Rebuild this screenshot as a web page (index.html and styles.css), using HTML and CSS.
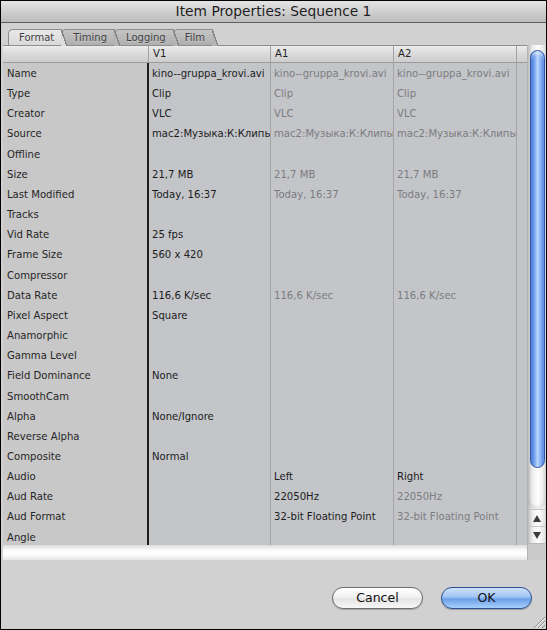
FILE: index.html
```html
<!DOCTYPE html>
<html>
<head>
<meta charset="utf-8">
<title>Item Properties: Sequence 1</title>
<link rel="stylesheet" href="styles.css">
</head>
<body>
<div class="window">
  <div class="titlebar">Item Properties: Sequence 1</div>
  <div class="content">
    <div class="tabs">
      <div class="tab active z4">Format</div>
      <div class="tab z3">Timing</div>
      <div class="tab z2">Logging</div>
      <div class="tab z1">Film</div>
    </div>
    <div class="pane">
      <div class="grid-area">
        <div class="table">
          <div class="row head">
            <div class="c l"></div><div class="c">V1</div><div class="c">A1</div><div class="c">A2</div><div class="c f"></div>
          </div>
          <div class="rows">
            <div class="row"><div class="c l">Name</div><div class="c">kino--gruppa_krovi.avi</div><div class="c g">kino--gruppa_krovi.avi</div><div class="c g">kino--gruppa_krovi.avi</div><div class="c f"></div></div>
            <div class="row"><div class="c l">Type</div><div class="c">Clip</div><div class="c g">Clip</div><div class="c g">Clip</div><div class="c f"></div></div>
            <div class="row"><div class="c l">Creator</div><div class="c">VLC</div><div class="c g">VLC</div><div class="c g">VLC</div><div class="c f"></div></div>
            <div class="row"><div class="c l">Source</div><div class="c">mac2:Музыка:К:Клипы:Кино</div><div class="c g">mac2:Музыка:К:Клипы:Кино</div><div class="c g">mac2:Музыка:К:Клипы:Кино</div><div class="c f"></div></div>
            <div class="row"><div class="c l">Offline</div><div class="c"></div><div class="c g"></div><div class="c g"></div><div class="c f"></div></div>
            <div class="row"><div class="c l">Size</div><div class="c">21,7 MB</div><div class="c g">21,7 MB</div><div class="c g">21,7 MB</div><div class="c f"></div></div>
            <div class="row"><div class="c l">Last Modified</div><div class="c">Today, 16:37</div><div class="c g">Today, 16:37</div><div class="c g">Today, 16:37</div><div class="c f"></div></div>
            <div class="row"><div class="c l">Tracks</div><div class="c"></div><div class="c g"></div><div class="c g"></div><div class="c f"></div></div>
            <div class="row"><div class="c l">Vid Rate</div><div class="c">25 fps</div><div class="c g"></div><div class="c g"></div><div class="c f"></div></div>
            <div class="row"><div class="c l">Frame Size</div><div class="c">560 x 420</div><div class="c g"></div><div class="c g"></div><div class="c f"></div></div>
            <div class="row"><div class="c l">Compressor</div><div class="c"></div><div class="c g"></div><div class="c g"></div><div class="c f"></div></div>
            <div class="row"><div class="c l">Data Rate</div><div class="c">116,6 K/sec</div><div class="c g">116,6 K/sec</div><div class="c g">116,6 K/sec</div><div class="c f"></div></div>
            <div class="row"><div class="c l">Pixel Aspect</div><div class="c">Square</div><div class="c g"></div><div class="c g"></div><div class="c f"></div></div>
            <div class="row"><div class="c l">Anamorphic</div><div class="c"></div><div class="c g"></div><div class="c g"></div><div class="c f"></div></div>
            <div class="row"><div class="c l">Gamma Level</div><div class="c"></div><div class="c g"></div><div class="c g"></div><div class="c f"></div></div>
            <div class="row"><div class="c l">Field Dominance</div><div class="c">None</div><div class="c g"></div><div class="c g"></div><div class="c f"></div></div>
            <div class="row"><div class="c l">SmoothCam</div><div class="c"></div><div class="c g"></div><div class="c g"></div><div class="c f"></div></div>
            <div class="row"><div class="c l">Alpha</div><div class="c">None/Ignore</div><div class="c g"></div><div class="c g"></div><div class="c f"></div></div>
            <div class="row"><div class="c l">Reverse Alpha</div><div class="c"></div><div class="c g"></div><div class="c g"></div><div class="c f"></div></div>
            <div class="row"><div class="c l">Composite</div><div class="c">Normal</div><div class="c g"></div><div class="c g"></div><div class="c f"></div></div>
            <div class="row"><div class="c l">Audio</div><div class="c"></div><div class="c">Left</div><div class="c">Right</div><div class="c f"></div></div>
            <div class="row"><div class="c l">Aud Rate</div><div class="c"></div><div class="c">22050Hz</div><div class="c g">22050Hz</div><div class="c f"></div></div>
            <div class="row"><div class="c l">Aud Format</div><div class="c"></div><div class="c">32-bit Floating Point</div><div class="c g">32-bit Floating Point</div><div class="c f"></div></div>
            <div class="row"><div class="c l">Angle</div><div class="c"></div><div class="c g"></div><div class="c g"></div><div class="c f"></div></div>
          </div>
        </div>
        <div class="hbar"></div>
      </div>
      <div class="vscroll">
        <div class="thumb"></div>
        <div class="track"></div>
        <div class="arrow up"><span class="tri-up"></span></div>
        <div class="arrow down"><span class="tri-down"></span></div>
        <div class="corner"></div>
      </div>
    </div>
    <div class="buttons">
      <button class="btn cancel">Cancel</button>
      <button class="btn ok">OK</button>
    </div>
    <svg class="grip" width="12" height="12" viewBox="0 0 12 12">
      <line x1="1" y1="12" x2="12" y2="1" stroke="#8a8a8a" stroke-width="1"/>
      <line x1="5" y1="12" x2="12" y2="5" stroke="#8a8a8a" stroke-width="1"/>
      <line x1="9" y1="12" x2="12" y2="9" stroke="#8a8a8a" stroke-width="1"/>
      <line x1="2" y1="12" x2="12" y2="2" stroke="#f4f4f4" stroke-width="1"/>
      <line x1="6" y1="12" x2="12" y2="6" stroke="#f4f4f4" stroke-width="1"/>
    </svg>
  </div>
</div>
</body>
</html>
```

FILE: styles.css
```css
* { box-sizing: border-box; }
html, body { margin: 0; padding: 0; background: #ffffff; }
body { font-family: "DejaVu Sans", "Liberation Sans", sans-serif; }

.window {
  width: 547px;
  height: 630px;
  border: 1px solid #000;
  background: #d1d1d1;
  display: flex;
  flex-direction: column;
  overflow: hidden;
}

.titlebar {
  height: 22px;
  flex: none;
  border-bottom: 1px solid #5e5e5e;
  background: linear-gradient(#e4e4e4, #cfcfcf 50%, #bcbcbc);
  color: #1e1e1e;
  font-size: 13.8px;
  line-height: 21px;
  text-align: center;
}

.content {
  position: relative;
  flex: 1;
  display: flex;
  flex-direction: column;
  padding-left: 2px;
  background: #d1d1d1;
}

/* tabs */
.tabs {
  display: flex;
  height: 16px;
  margin-top: 6px;
  padding-left: 5px;
}
.tab {
  position: relative;
  height: 16px;
  padding: 0 7px 0 11px;
  font-size: 10px;
  line-height: 16px;
  color: #3e3e3e;
  background: linear-gradient(#c4c4c4, #afafaf);
  border-top: 1px solid #8c8c8c;
  border-left: 1px solid #8c8c8c;
  border-top-left-radius: 5px;
  text-shadow: 0 1px 0 rgba(255,255,255,0.35);
}
.tab::after {
  content: "";
  position: absolute;
  top: -1px;
  right: -6px;
  width: 6px;
  height: 17px;
  background: linear-gradient(to top right, #b5b5b5 0, #b5b5b5 calc(50% - 0.8px), #858585 calc(50% - 0.8px), #858585 calc(50% + 0.6px), transparent calc(50% + 0.6px));
}
.tab.active {
  background: linear-gradient(#e9e9e9, #d9d9d9);
  padding-left: 10px;
}
.tab.active::after {
  background: linear-gradient(to top right, #dcdcdc 0, #dcdcdc calc(50% - 0.8px), #858585 calc(50% - 0.8px), #858585 calc(50% + 0.6px), transparent calc(50% + 0.6px));
}
.z4 { z-index: 4; }
.z3 { z-index: 3; }
.z2 { z-index: 2; }
.z1 { z-index: 1; }

/* pane */
.pane {
  display: flex;
  height: 515px;
  flex: none;
  margin-right: 1px;
}
.grid-area {
  flex: 1;
  display: flex;
  flex-direction: column;
}
.table {
  height: 500px;
  display: flex;
  flex-direction: column;
  background: #c3c5c9;
  font-size: 10.1px;
}
.row {
  display: grid;
  grid-template-columns: 146px 122px 123px 123px 1fr;
  height: 20.17px;
  line-height: 22px;
}
.c {
  border-right: 1px solid #a3a5a9;
  padding-left: 3px;
  white-space: nowrap;
  overflow: hidden;
  color: #1c1c1c;
}
.c.l {
  padding-left: 4px;
  background: #c8c8c8;
  border-right: 2px solid #1d1d1d;
  color: #262626;
}
.c.g { color: #7c7c7e; }
.c.f { border-right: none; }

.row.head {
  height: 18px;
  line-height: 16px;
  flex: none;
  border-top: 1px solid #8f8f8f;
  border-bottom: 1px solid #9c9c9c;
  background: linear-gradient(#ececec, #dadada 50%, #cdcdcd);
}
.row.head .c {
  border-right: 1px solid #a2a2a2;
  color: #222;
  padding-left: 4px;
}
.row.head .c.l {
  background: transparent;
  border-right: 1px solid #a2a2a2;
}
.row.head .c.f { border-right: none; }

.rows {
  flex: 1;
  overflow: hidden;
}

.hbar {
  height: 15px;
  margin-right: -3px;
  background: linear-gradient(#dcdcdc, #fbfbfb 35%, #ffffff 60%, #e6e6e6);
}

/* vertical scrollbar */
.vscroll {
  width: 18px;
  display: flex;
  flex-direction: column;
  background: linear-gradient(to right, #bcbcbc, #ececec 25%, #ffffff 60%, #e2e2e2);
  border-left: 1px solid #b3b3b3;
}
.thumb {
  margin: 5px 0 0 2px;
  height: 418px;
  border-radius: 8px;
  border: 1px solid #2c54a8;
  background: linear-gradient(to right, #2f62c8, #6b9cef 22%, #b9d6fb 50%, #86b1f4 75%, #3f72d6);
  box-shadow: inset 0 3px 3px rgba(255,255,255,0.5);
}
.track {
  flex: 1;
  border-bottom-left-radius: 8px;
  border-bottom-right-radius: 8px;
  box-shadow: inset 0 -3px 3px rgba(0,0,0,0.08);
}
.arrow {
  height: 17px;
  display: flex;
  align-items: center;
  justify-content: center;
  border-top: 1px solid #c4c4c4;
}
.tri-up {
  width: 0; height: 0;
  border-left: 4px solid transparent;
  border-right: 4px solid transparent;
  border-bottom: 7px solid #3c3c3c;
}
.tri-down {
  width: 0; height: 0;
  border-left: 4px solid transparent;
  border-right: 4px solid transparent;
  border-top: 7px solid #3c3c3c;
}
.corner {
  height: 17px;
  background: #c9c9c9;
  border-top: 1px solid #b8b8b8;
}

/* buttons */
.buttons {
  display: flex;
  justify-content: flex-end;
  gap: 18px;
  margin-top: 27px;
  padding-right: 14px;
}
.btn {
  width: 91px;
  height: 22px;
  border-radius: 11px;
  font-family: "DejaVu Sans", "Liberation Sans", sans-serif;
  font-size: 12.5px;
  color: #111;
  padding: 0;
  line-height: 20px;
}
.btn.cancel {
  border: 1px solid #6c6c6c;
  background: linear-gradient(#ffffff, #f2f2f2 45%, #e4e4e4 55%, #f8f8f8);
  box-shadow: 0 1px 1px rgba(0,0,0,0.2);
}
.btn.ok {
  border: 1px solid #2d4f95;
  background: linear-gradient(#cfe3fb, #9fc4f4 45%, #6c9fe8 55%, #a8d0fa);
  box-shadow: 0 1px 1px rgba(0,0,0,0.25);
}

.grip {
  position: absolute;
  right: 1px;
  bottom: 1px;
}
```
